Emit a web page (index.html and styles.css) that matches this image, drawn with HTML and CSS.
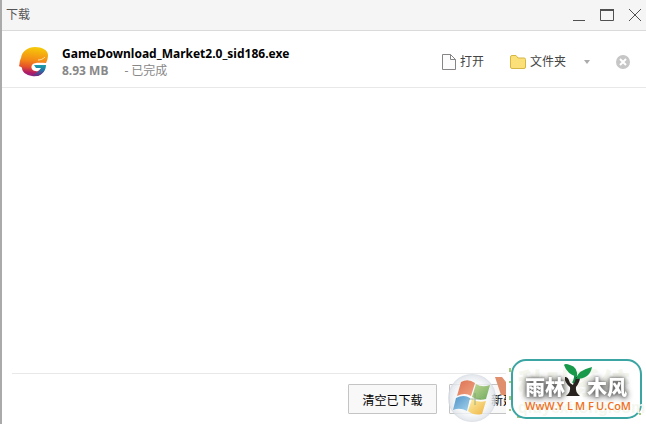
FILE: index.html
```html
<!DOCTYPE html>
<html lang="zh-CN">
<head>
<meta charset="utf-8">
<title>下载</title>
<link rel="stylesheet" href="styles.css">
</head>
<body>
<main class="window">
  <header class="titlebar">
    <h1 class="title">下载</h1>
    <div class="controls">
      <button class="control" aria-label="最小化"><svg width="14" height="14" viewBox="0 0 14 14"><path d="M1 12.5h12"/></svg></button>
      <button class="control" aria-label="最大化"><svg width="14" height="14" viewBox="0 0 14 14"><path d="M.5 2v10.500h13V2"/><path d="M0 2h14" stroke-width="2"/></svg></button>
      <button class="control" aria-label="关闭"><svg width="14" height="14" viewBox="0 0 14 14"><path d="M1 1l12 12M13 1L1 13"/></svg></button>
    </div>
  </header>

  <ul class="downloads">
    <li class="item">
      <svg class="app-icon" width="30" height="32" viewBox="0 0 30 32" aria-hidden="true">
        <defs>
          <linearGradient id="flame" x1="0.550" y1="0" x2="0.450" y2="1">
            <stop offset="0" stop-color="#f6cb08"/><stop offset=".45" stop-color="#f48c16"/>
            <stop offset=".7" stop-color="#e5512a"/><stop offset=".88" stop-color="#b01c65"/><stop offset="1" stop-color="#8c2280"/>
          </linearGradient>
          <linearGradient id="hook" x1="0" y1="0" x2="0" y2="1">
            <stop offset="0" stop-color="#18a0a8"/><stop offset=".5" stop-color="#2372a8"/><stop offset="1" stop-color="#75277f"/>
          </linearGradient>
        </defs>
        <path fill="url(#flame)" d="M1 21C2 19 1 17 3 13C4 6 10 2 17 2C24 2 30 5 30 10C30 13 29 16 28 18C23 18 16 17 14 20C12 24 16 27 20 26L24 23L26 26C23 30 19 32 14 31C8 30 4 27 4 23C3 21 2 22 1 21Z"/>
        <path fill="url(#hook)" d="M16 20H28C28 25 25 29 20 31H14L21 26L23 23H18Z"/>
        <path fill="none" stroke="#fbe0a0" d="M20 15C23 15 25 14 27 12"/>
      </svg>
      <div class="info">
        <strong class="name">GameDownload_Market2.0_sid186.exe</strong>
        <div class="meta"><b>8.93 MB</b><span>- 已完成</span></div>
      </div>
      <div class="actions">
        <button class="action"><svg width="14" height="16" viewBox="0 0 14 16" aria-hidden="true"><path d="M.5.5h8l5 5v10H.5zM8.500.5v5h5" fill="#fcfcfc" stroke="#858585"/></svg>打开</button>
        <button class="action folder"><svg width="16" height="14" viewBox="0 0 16 14" aria-hidden="true"><path d="M.5 2Q.5.5 2 .5h4L8 3h6Q15.500 3 15.500 4.500v7.500q0 1.500-1.500 1.500H2Q.5 13.500.5 12z" fill="#fbe07a" stroke="#d5b544"/></svg>文件夹</button>
        <button class="more" aria-label="更多"><svg width="6" height="4" viewBox="0 0 6 4"><path d="M0 0h6L3 4z" fill="#aaa"/></svg></button>
        <button class="remove" aria-label="删除"><svg width="14" height="14" viewBox="0 0 14 14"><circle cx="7" cy="7" r="7" fill="#c6c6c6"/><path d="M4 4l6 6M10 4l-6 6" stroke="#fff" stroke-width="2"/></svg></button>
      </div>
    </li>
  </ul>

  <footer class="footer">
    <button class="button">清空已下载</button>
    <button class="button wide">新建下载</button>
  </footer>

  <svg class="orb" width="50" height="50" viewBox="0 0 50 50" aria-hidden="true">
    <defs>
      <radialGradient id="glass"><stop offset="0" stop-color="#fff"/><stop offset=".7" stop-color="#f4f6f8"/><stop offset=".93" stop-color="#e0e4ea"/><stop offset="1" stop-color="#d0d7df"/></radialGradient>
      <linearGradient id="red" x2="1" y2="1"><stop stop-color="#dc7152"/><stop offset="1" stop-color="#f0a483"/></linearGradient>
      <linearGradient id="green" x2="1" y2="1"><stop stop-color="#c1d895"/><stop offset="1" stop-color="#70aa5e"/></linearGradient>
      <linearGradient id="blue" x2="1" y2="1"><stop stop-color="#4d91c8"/><stop offset="1" stop-color="#a7d4ec"/></linearGradient>
      <linearGradient id="yellow" x2="1" y2="1"><stop stop-color="#fff0a7"/><stop offset="1" stop-color="#edb344"/></linearGradient>
    </defs>
    <circle cx="25" cy="25" r="24" fill="url(#glass)" opacity=".8"/>
    <path fill="url(#red)" d="M14 9Q21 5 28 10L24 23Q18 19 10 23Z"/>
    <path fill="url(#green)" d="M29 11Q35 15 43 12L39 26Q32 28 25 24Z"/>
    <path fill="url(#blue)" d="M9 25Q17 21 23 25L20 38Q13 34 6 37Z"/>
    <path fill="url(#yellow)" d="M25 26Q31 30 39 28L35 41Q27 43 21 38Z"/>
    <path d="M28 20v12M22 26h12" stroke="#7f9a74" opacity=".7"/>
  </svg>
  <svg class="ribbon" width="11" height="18" viewBox="0 0 11 18" aria-hidden="true"><path d="M0 0H7L11 5V18H6Z" fill="#e08f6c"/></svg>

  <aside class="stamp">
    <svg class="stamp-art" width="140" height="66" viewBox="0 0 140 66" role="img" aria-label="雨林木风 WwW.YLMFU.CoM">
      <path fill="none" stroke="#a5c779" stroke-width="2" stroke-dasharray="4 9 2 13" d="M4 10V59H134V14"/>
      <rect x="6" y="2" width="129" height="58" rx="14" fill="#fff" stroke="#3aa5a3" stroke-width="2"/>
      <text class="ghost" x="12" y="36">秋叶系统</text>
      <text class="ghost-url" x="12" y="55">qiuyexitong.com</text>
      <g class="brand"><text x="19" y="37">雨林</text><text x="81" y="37">木风</text></g>
      <path fill="#28231f" d="M59 19Q62 18 64 25L67 27L69 20Q71 17 74 19Q74 24 70 29Q69 34 74 38H60Q65 34 64 29Q58 24 59 19Z"/>
      <path fill="none" stroke="#168948" stroke-width="2" d="M67 25Q70 20 69 13"/>
      <path fill="#199a4b" d="M58 7Q59 5 64 7Q72 9 71 19Q61 16 58 7ZM70 21Q72 12 86 9Q84 21 70 21Z"/>
      <g class="url"><text x="19" y="52">WwW.</text><text x="51" y="52">Y</text><text x="61" y="52">L</text><text x="69" y="52">M</text><text x="82" y="52">F</text><text x="90" y="52">U.CoM</text></g>
    </svg>
  </aside>
</main>
</body>
</html>
```
FILE: styles.css
```css
* { box-sizing: border-box; }

body {
  margin: 0;
  font: 12px/16px "Noto Sans", "Noto Sans CJK SC", sans-serif;
  color: #444;
  background: #fff;
}

button {
  padding: 0;
  border: 0;
  background: none;
  color: inherit;
  font: inherit;
}

svg { display: block; flex: none; }

.window {
  position: relative;
  display: flex;
  flex-direction: column;
  min-height: 100vh;
  border-left: 2px solid #aaa;
  overflow: hidden;
}

.titlebar {
  display: flex;
  align-items: center;
  justify-content: space-between;
  height: 31px;
  padding: 0 4px;
  border-bottom: 1px solid #dadada;
  background: #f5f5f5;
}

.title { margin: 0; font-size: 12px; font-weight: 400; color: #555; }

.controls { display: flex; gap: 14px; }
.control svg { fill: none; stroke: #505050; }

.downloads { flex: 1; margin: 0; padding: 0; list-style: none; }

.item {
  display: flex;
  align-items: center;
  height: 57px;
  padding: 0 16px;
  border-bottom: 1px solid #e8e8e8;
}

.app-icon { margin-top: 4px; }
.info { margin-left: 14px; padding-top: 6px; }
.name { display: block; color: #000; line-height: 18px; }
.meta { display: flex; gap: 16px; color: #888; }

.actions { display: flex; align-items: center; margin-left: auto; padding-top: 6px; }
.action { display: flex; align-items: center; gap: 4px; }
.folder { margin-left: 26px; }
.more { margin-left: 18px; }
.remove { margin-left: 26px; }

.footer {
  display: flex;
  justify-content: flex-end;
  gap: 12px;
  margin-left: 10px;
  padding: 10px 65px 10px 0;
  border-top: 1px solid #e8e8e8;
}

.button {
  width: 89px;
  height: 30px;
  padding-top: 4px;
  border: 1px solid #c4c4c4;
  border-radius: 1px;
  background: #f8f8f8;
  color: #000;
}
.wide { width: 132px; }

.orb { position: absolute; right: 149px; bottom: 1px; }
.ribbon { position: absolute; right: 140px; bottom: 29px; }
.stamp { position: absolute; right: 0; bottom: 0; background: #fff; }

.brand {
  font: 900 20px "Noto Sans CJK SC", sans-serif;
  fill: #fff;
  filter: drop-shadow(0 0 1px #777) drop-shadow(0 1px 3px #444);
}
.ghost { font: 900 28px "Noto Sans CJK SC", sans-serif; fill: #f5f7ef; }
.ghost-url { font: 700 16px "Liberation Sans", sans-serif; fill: #f5f7ef; }
.url { font: 600 11px "Open Sans", sans-serif; fill: #f07021; }
```
